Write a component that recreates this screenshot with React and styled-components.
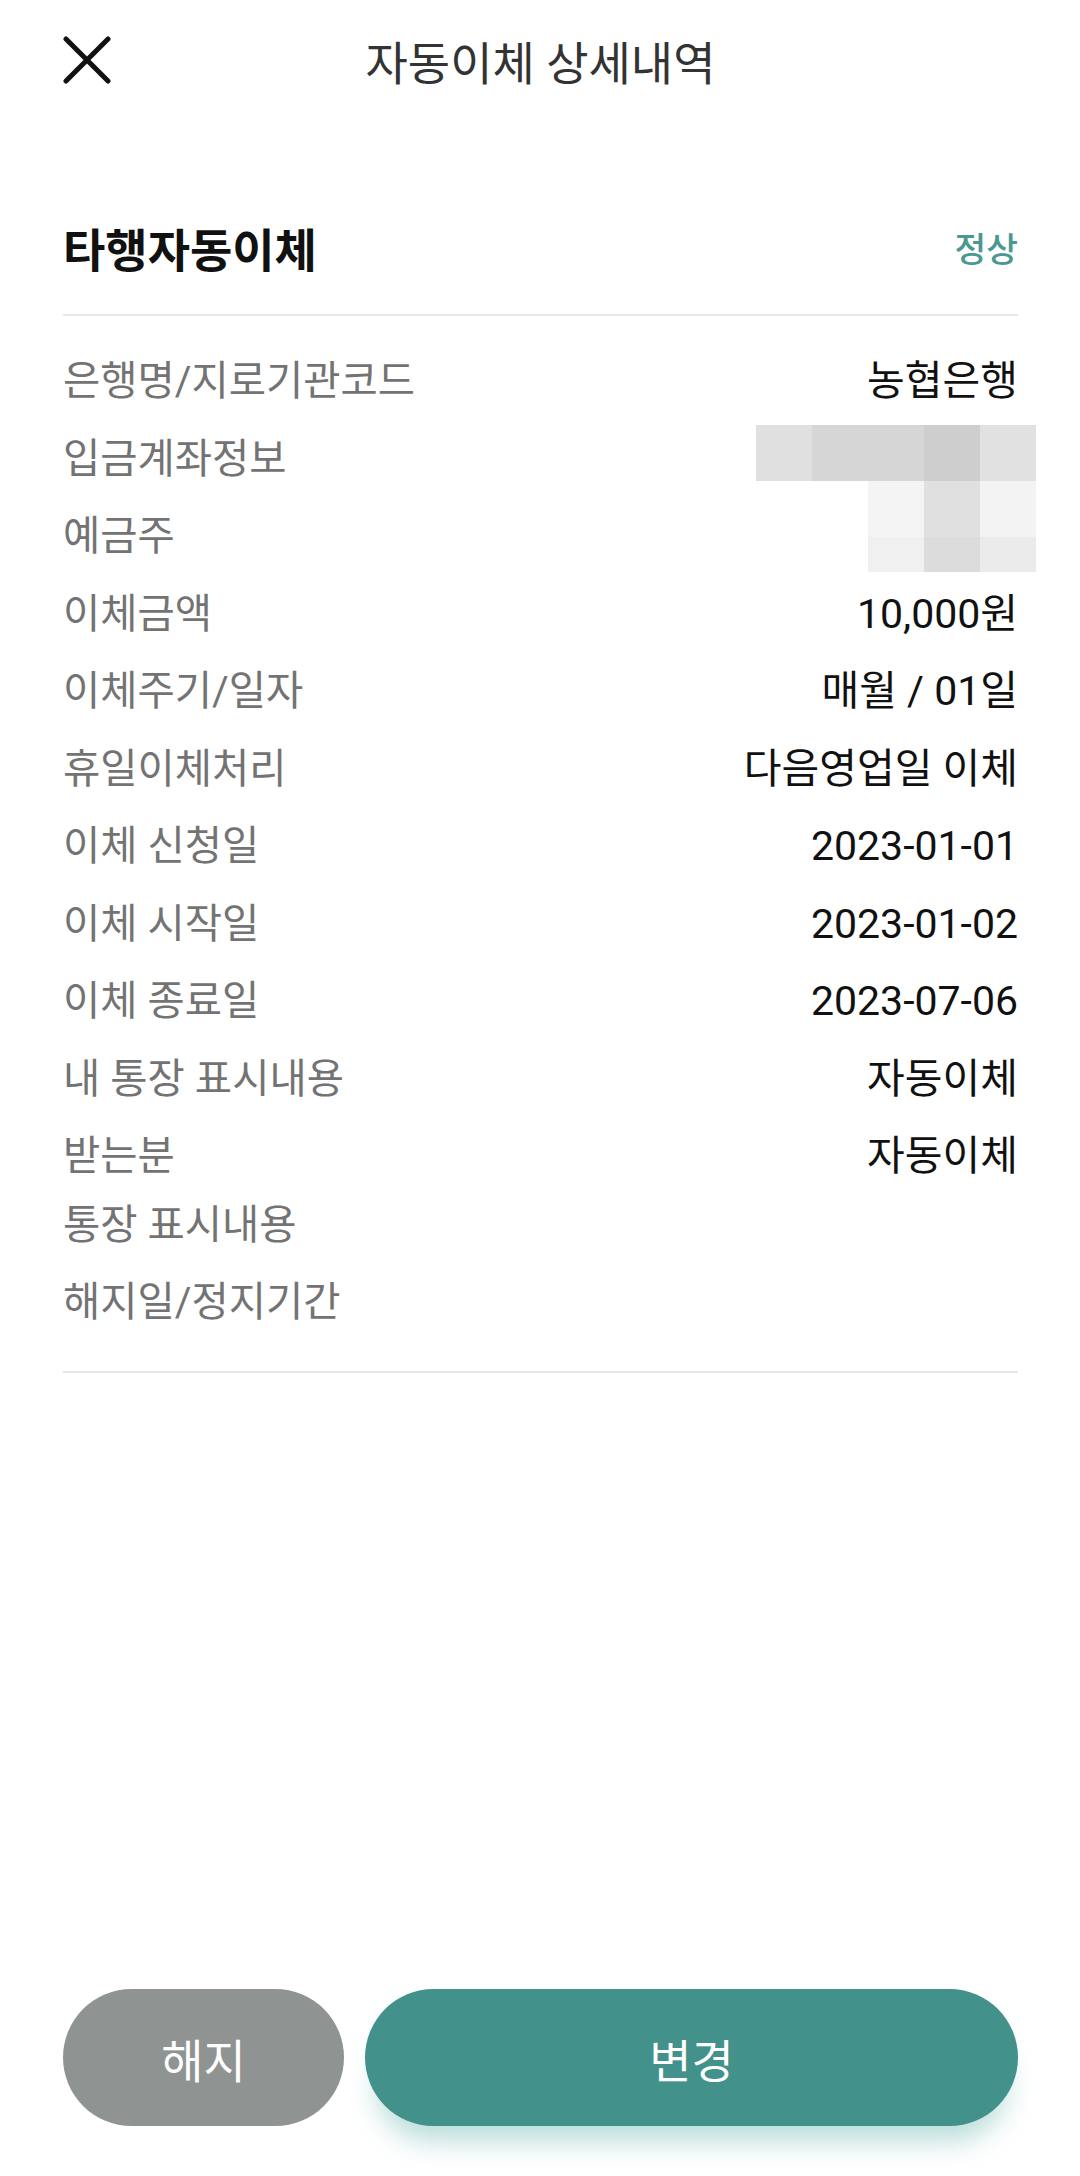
import styled, { createGlobalStyle } from 'styled-components'

const GlobalStyle = createGlobalStyle`
  body {
    margin: 0;
    background: #ffffff;
    font-family: Roboto, "Noto Sans CJK KR", sans-serif;
  }
  * { box-sizing: border-box; }
`

const Page = styled.div`
  min-height: 100vh;
  display: flex;
  flex-direction: column;
  padding: 0 62px 50px 63px;
`

const Header = styled.header`
  height: 120px;
  display: grid;
  grid-template-columns: 48px 1fr 48px;
  align-items: center;
`

const CloseButton = styled.button`
  width: 48px;
  height: 48px;
  padding: 0;
  border: none;
  background: none;
  display: flex;
  align-items: center;
  justify-content: center;
  cursor: pointer;
`

const HeaderTitle = styled.h1`
  margin: 0;
  text-align: center;
  font-size: 46px;
  font-weight: 400;
  color: #333333;
`

const TitleRow = styled.div`
  margin-top: 98px;
  height: 98px;
  padding-bottom: 38px;
  display: flex;
  align-items: center;
  justify-content: space-between;
  border-bottom: 2px solid #e8e8e8;
`

const SectionTitle = styled.h2`
  margin: 0;
  font-size: 46px;
  font-weight: 700;
  color: #111111;
`

const Status = styled.span`
  font-size: 34.5px;
  font-weight: 500;
  color: #4a9891;
`

const List = styled.div`
  margin-top: 31px;
  padding-bottom: 34px;
  display: flex;
  flex-direction: column;
  gap: 9px;
  border-bottom: 2px solid #e8e8e8;
`

const Row = styled.div`
  position: relative;
  display: flex;
  justify-content: space-between;
  align-items: flex-start;
  line-height: 68.5px;
`

const Label = styled.span`
  font-size: 40.5px;
  color: #737373;
`

const Value = styled.span`
  font-size: 41px;
  color: #111111;
  text-align: right;
`

const Mosaic = styled.div`
  position: absolute;
  top: 0;
  right: -18px;
  display: grid;
  grid-template-columns: repeat(5, 56px);
  grid-template-rows: 56px 56px 35px;
`

const Cell = styled.div`
  background: ${p => p.$c || 'transparent'};
`

const Footer = styled.div`
  margin-top: auto;
  display: flex;
  gap: 21px;
`

const ActionButton = styled.button`
  height: 137px;
  flex: ${p => (p.$primary ? '0 0 653px' : '0 0 281px')};
  border: none;
  border-radius: 69px;
  background: ${p => (p.$primary ? '#43918b' : '#8f9493')};
  box-shadow: ${p => (p.$primary ? '0 26px 26px -10px rgba(67, 160, 154, 0.35)' : 'none')};
  color: #ffffff;
  font-family: inherit;
  font-size: 46px;
  cursor: pointer;
`

const mosaicColors = [
  '#e0e0e0', '#d6d6d6', '#d6d6d6', '#cecece', '#e1e1e1',
  null, null, '#f4f4f4', '#e0e0e0', '#f3f3f3',
  null, null, '#f0f0f0', '#dcdcdc', '#ebebeb',
]

const rows = [
  { label: '은행명/지로기관코드', value: '농협은행' },
  { label: '입금계좌정보', value: '', masked: true },
  { label: '예금주', value: '' },
  { label: '이체금액', value: '10,000원' },
  { label: '이체주기/일자', value: '매월 / 01일' },
  { label: '휴일이체처리', value: '다음영업일 이체' },
  { label: '이체 신청일', value: '2023-01-01' },
  { label: '이체 시작일', value: '2023-01-02' },
  { label: '이체 종료일', value: '2023-07-06' },
  { label: '내 통장 표시내용', value: '자동이체' },
  { label: ['받는분', '통장 표시내용'], value: '자동이체' },
  { label: '해지일/정지기간', value: '' },
]

const App = () => {
  return (
    <>
      <GlobalStyle />
      <Page>
        <Header>
          <CloseButton aria-label="닫기">
            <svg width="48" height="48" viewBox="0 0 48 48">
              <path d="M3 3 L45 45 M45 3 L3 45" stroke="#111" strokeWidth="5" strokeLinecap="round" />
            </svg>
          </CloseButton>
          <HeaderTitle>자동이체 상세내역</HeaderTitle>
          <div />
        </Header>

        <TitleRow>
          <SectionTitle>타행자동이체</SectionTitle>
          <Status>정상</Status>
        </TitleRow>

        <List>
          {rows.map((r, i) => (
            <Row key={i}>
              <Label>
                {Array.isArray(r.label)
                  ? r.label.map((l, j) => (
                      <span key={j}>
                        {l}
                        {j === 0 && <br />}
                      </span>
                    ))
                  : r.label}
              </Label>
              <Value>{r.value}</Value>
              {r.masked && (
                <Mosaic>
                  {mosaicColors.map((c, j) => (
                    <Cell key={j} $c={c} />
                  ))}
                </Mosaic>
              )}
            </Row>
          ))}
        </List>

        <Footer>
          <ActionButton>해지</ActionButton>
          <ActionButton $primary>변경</ActionButton>
        </Footer>
      </Page>
    </>
  )
}

export default App
